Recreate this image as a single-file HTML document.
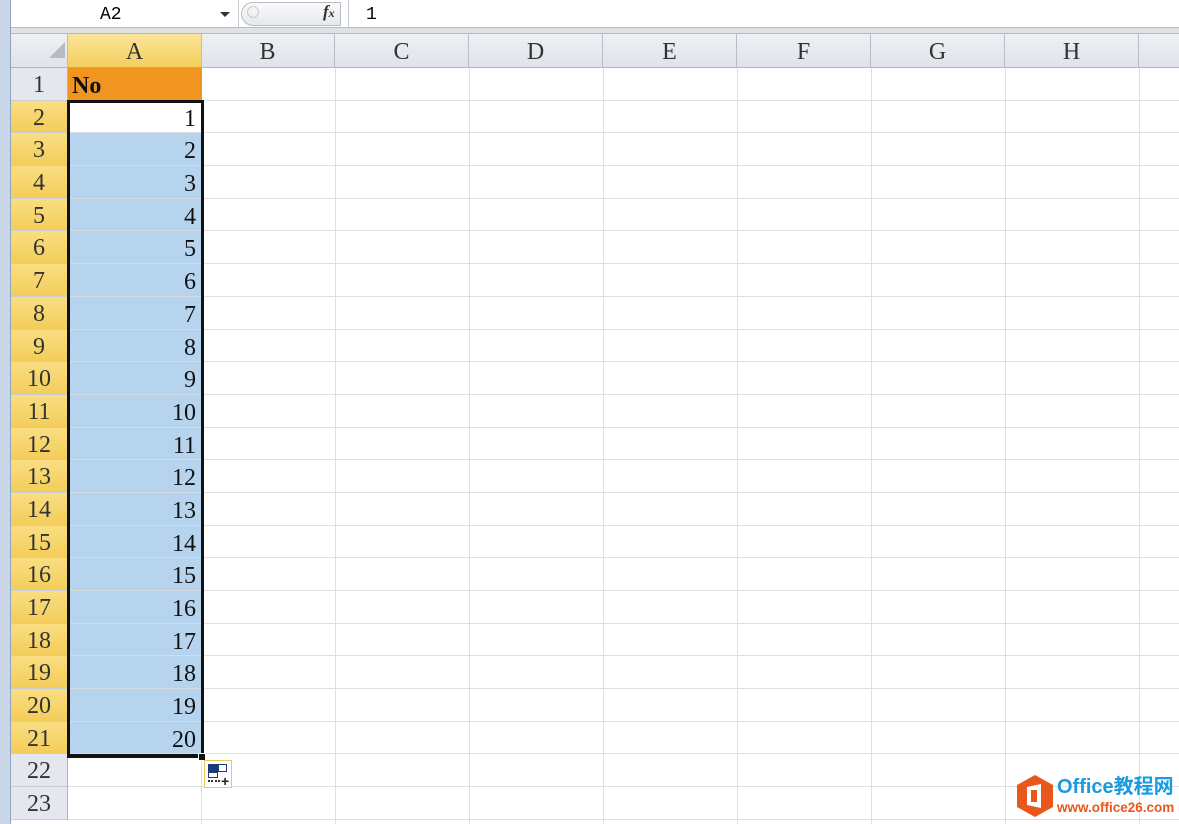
<!DOCTYPE html>
<html><head><meta charset="utf-8"><style>
*{margin:0;padding:0;box-sizing:border-box}
body{width:1179px;height:824px;overflow:hidden;background:#fff;position:relative;font-family:"Liberation Serif",serif}
.abs{position:absolute}
#left{left:0;top:0;width:11px;height:824px;background:#c9d7e8;border-right:1px solid #8ea3bf}
#fbar{left:11px;top:0;width:1168px;height:28px;background:#fff;border-bottom:1px solid #b7bcc4}
#band{left:11px;top:28px;width:1168px;height:6px;background:#dfe3e8;border-bottom:1px solid #b4b9c0}
#grid{left:68px;top:68px;width:1111px;height:756px;
background-image:repeating-linear-gradient(to right,transparent 0,transparent 133px,#dcdfe3 133px,#dcdfe3 134px)}
#rows{left:68px;top:68px;width:1111px}
.r{height:32.7px;border-bottom:1px solid #dcdfe3}
#colh{left:11px;top:34px;width:1168px;height:34px;background:linear-gradient(#eef0f4,#dfe3ea);border-bottom:1px solid #b0b6bf}
.ch{position:absolute;top:0;height:34px;width:134px;border-right:1px solid #b8bec7;text-align:center;font-size:24px;line-height:36px;color:#333}
#rowh{left:11px;top:68px;width:57px;border-right:1px solid #b0b6bf}
.rh{height:32.7px;border-bottom:1px solid #c9ced6;background:#e4e8ee;text-align:center;font-size:24px;line-height:34px;color:#333}
.sel{background:linear-gradient(#f9de82,#f3cd5a);color:#333}
#colA{left:68px;top:68px;width:134px}
.c{height:32.7px;border-bottom:1px solid #d8dbe0;text-align:right;padding-right:6px;font-size:24px;line-height:36px;color:#111;background:#b7d4ee}
</style></head><body>
<div id="left" class="abs"></div>
<div id="fbar" class="abs">
 <div class="abs" style="left:0;top:0;width:228px;height:28px;border-right:1px solid #c5cad1;font-family:'Liberation Mono',monospace;font-size:18px;line-height:30px;padding-left:89px">A2</div>
 <div class="abs" style="left:209px;top:12px;width:0;height:0;border-left:5px solid transparent;border-right:5px solid transparent;border-top:5px solid #333"></div>
 <div class="abs" style="left:230px;top:2px;width:100px;height:24px;border:1px solid #b8bdc5;border-radius:12px 0 0 12px;background:linear-gradient(#fafafa,#e6e8eb)"></div>
 <div class="abs" style="left:236px;top:6px;width:12px;height:12px;border-radius:50%;border:1px solid #c6c9ce"></div>
 <div class="abs" style="left:312px;top:2px;font-style:italic;font-weight:bold;font-size:17px;color:#333">f<span style="font-size:12px">x</span></div>
 <div class="abs" style="left:337px;top:0;width:1px;height:28px;background:#c5cad1"></div>
 <div class="abs" style="left:355px;top:0;font-family:'Liberation Mono',monospace;font-size:18px;line-height:30px">1</div>
</div>
<div id="band" class="abs"></div>
<div id="grid" class="abs"></div>
<div id="rows" class="abs">
<div class="r"></div><div class="r"></div><div class="r"></div><div class="r"></div><div class="r"></div><div class="r"></div><div class="r"></div><div class="r"></div><div class="r"></div><div class="r"></div><div class="r"></div><div class="r"></div><div class="r"></div><div class="r"></div><div class="r"></div><div class="r"></div><div class="r"></div><div class="r"></div><div class="r"></div><div class="r"></div><div class="r"></div><div class="r"></div><div class="r"></div>
</div>
<div id="colh" class="abs">
 <div class="abs" style="left:0;top:0;width:57px;height:34px;border-right:1px solid #b8bec7"></div>
 <div class="abs" style="left:38px;top:8px;width:0;height:0;border-left:16px solid transparent;border-bottom:16px solid #b8bcc2"></div>
 <div class="ch" style="left:57px;background:linear-gradient(#fbe59a,#f4cf5d);border-bottom:1px solid #e0a83a">A</div>
 <div class="ch" style="left:190px">B</div>
 <div class="ch" style="left:324px">C</div>
 <div class="ch" style="left:458px">D</div>
 <div class="ch" style="left:592px">E</div>
 <div class="ch" style="left:726px">F</div>
 <div class="ch" style="left:860px">G</div>
 <div class="ch" style="left:994px">H</div>
</div>
<div id="rowh" class="abs">
<div class="rh">1</div><div class="rh sel">2</div><div class="rh sel">3</div><div class="rh sel">4</div><div class="rh sel">5</div><div class="rh sel">6</div><div class="rh sel">7</div><div class="rh sel">8</div><div class="rh sel">9</div><div class="rh sel">10</div><div class="rh sel">11</div><div class="rh sel">12</div><div class="rh sel">13</div><div class="rh sel">14</div><div class="rh sel">15</div><div class="rh sel">16</div><div class="rh sel">17</div><div class="rh sel">18</div><div class="rh sel">19</div><div class="rh sel">20</div><div class="rh sel">21</div><div class="rh">22</div><div class="rh">23</div>
</div>
<div id="colA" class="abs">
<div class="c" style="background:#f0951f;text-align:left;padding-left:4px;font-weight:bold;border-bottom-color:#f0951f">No</div>
<div class="c" style="background:#fff">1</div><div class="c">2</div><div class="c">3</div><div class="c">4</div><div class="c">5</div><div class="c">6</div><div class="c">7</div><div class="c">8</div><div class="c">9</div><div class="c">10</div><div class="c">11</div><div class="c">12</div><div class="c">13</div><div class="c">14</div><div class="c">15</div><div class="c">16</div><div class="c">17</div><div class="c">18</div><div class="c">19</div><div class="c">20</div>
</div>
<div class="abs" style="left:67px;top:100px;width:137px;height:658px;border:3px solid #111;border-bottom-width:4px"></div>
<div class="abs" style="left:198px;top:753px;width:8px;height:8px;background:#111;border:1px solid #fff"></div>
<div class="abs" style="left:204px;top:760px;width:28px;height:28px;border:1px solid #e8c95a;background:#fff">
 <div class="abs" style="left:3px;top:3px;width:10px;height:8px;background:#1f3a7a"></div>
 <div class="abs" style="left:13px;top:3px;width:9px;height:8px;border:1px solid #1f3a7a"></div>
 <div class="abs" style="left:3px;top:11px;width:10px;height:6px;border:1px solid #1f3a7a"></div>
 <div class="abs" style="left:3px;top:19px;width:12px;border-top:2px dotted #333"></div>
 <div class="abs" style="left:16px;top:12px;font:bold 14px 'Liberation Sans',sans-serif;color:#222">+</div>
</div>
<div class="abs" style="left:1016px;top:774px">
 <svg width="38" height="44" viewBox="0 0 38 44"><polygon points="19,1 37,11 37,33 19,43 1,33 1,11" fill="#e8571c"/><path d="M11 13 L25 10 L25 34 L11 31 Z" fill="#fff"/><rect x="15" y="16" width="6" height="12" fill="#e8571c"/></svg>
</div>
<div class="abs" style="left:1057px;top:776px;white-space:nowrap;font:bold 20px 'Liberation Sans','Noto Sans CJK SC',sans-serif;color:#1a9be0;line-height:22px">Office教程网</div>
<div class="abs" style="left:1057px;top:800px;white-space:nowrap;font:bold 13.5px 'Liberation Sans',sans-serif;color:#e8571c;line-height:15px">www.office26.com</div>
</body></html>
